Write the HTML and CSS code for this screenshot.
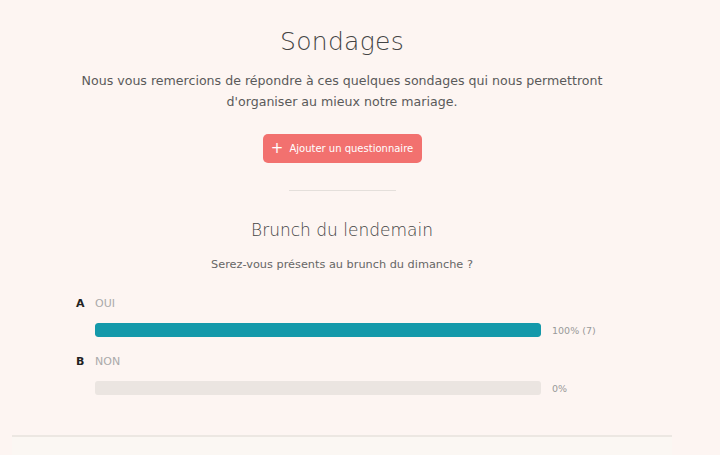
FILE: index.html
```html
<!DOCTYPE html>
<html lang="fr">
<head>
<meta charset="utf-8">
<title>Sondages</title>
<link rel="stylesheet" href="styles.css">
</head>
<body>
<main class="page">
  <section class="intro">
    <h1 class="title">Sondages</h1>
    <p class="lead">Nous vous remercions de répondre à ces quelques sondages qui nous permettront<br>d'organiser au mieux notre mariage.</p>
    <button class="add-btn" type="button"><span class="plus">+</span> Ajouter un questionnaire</button>
    <hr class="divider">
  </section>
  <section class="poll">
    <h2 class="poll-title">Brunch du lendemain</h2>
    <p class="poll-question">Serez-vous présents au brunch du dimanche ?</p>
    <div class="options">
      <div class="option">
        <div class="option-head"><span class="letter">A</span><span class="answer">OUI</span></div>
        <div class="option-row">
          <div class="bar"><div class="fill" style="width:100%"></div></div>
          <span class="pct">100% (7)</span>
        </div>
      </div>
      <div class="option">
        <div class="option-head"><span class="letter">B</span><span class="answer">NON</span></div>
        <div class="option-row">
          <div class="bar"><div class="fill" style="width:0%"></div></div>
          <span class="pct">0%</span>
        </div>
      </div>
    </div>
  </section>
  <div class="footer-line"></div>
</main>
</body>
</html>
```

FILE: styles.css
```css
html, body {
  margin: 0;
  padding: 0;
  background: #fdf5f2;
  font-family: "DejaVu Sans", "Noto Sans", sans-serif;
  color: #4a4a4a;
}

.page {
  width: 660px;
  margin-left: 12px;
  height: 455px;
  overflow: hidden;
}

.intro {
  display: flex;
  flex-direction: column;
  align-items: center;
  padding-top: 26px;
}

.title {
  margin: 0;
  font-weight: 300;
  font-size: 25px;
  line-height: 32px;
  color: #444;
  letter-spacing: 0.3px;
}

.lead {
  margin: 12px 0 0;
  text-align: center;
  font-size: 12.6px;
  line-height: 21px;
  color: #5a5a5a;
  font-weight: normal;
}

.add-btn {
  margin-top: 22px;
  width: 159px;
  height: 29px;
  border: none;
  border-radius: 5px;
  background: #f2716f;
  color: #fff;
  font-family: inherit;
  font-size: 10px;
  padding: 0;
  display: flex;
  align-items: center;
  justify-content: center;
  gap: 3px;
}

.plus {
  font-size: 15px;
  line-height: 1;
  margin-right: 3px;
}

.divider {
  margin: 27px 0 0;
  width: 107px;
  border: none;
  border-top: 1px solid #e4dfdb;
}

.poll {
  display: flex;
  flex-direction: column;
  align-items: center;
}

.poll-title {
  margin: 27px 0 0;
  font-size: 17px;
  line-height: 24px;
  font-weight: 300;
  color: #444;
}

.poll-question {
  margin: 15px 0 0;
  font-size: 11.3px;
  line-height: 16px;
  color: #666;
}

.options {
  align-self: stretch;
  padding-left: 64px;
  margin-top: 22px;
  display: flex;
  flex-direction: column;
  gap: 16px;
}

.option-head {
  display: flex;
  align-items: center;
  height: 16px;
}

.letter {
  width: 19px;
  font-size: 11px;
  font-weight: bold;
  color: #222;
}

.answer {
  font-size: 11px;
  color: #aaa;
}

.option-row {
  margin-top: 12px;
  display: flex;
  align-items: center;
  padding-left: 19px;
}

.bar {
  width: 446px;
  height: 14px;
  border-radius: 3px;
  background: #ebe5e1;
  overflow: hidden;
}

.fill {
  height: 100%;
  background: #1499aa;
  border-radius: 3px;
}

.pct {
  margin-left: 11px;
  font-size: 9.5px;
  color: #999;
}

.footer-line {
  margin-top: 40px;
  height: 20px;
  border-top: 2px solid #ece7e2;
  background: #fbf7f3;
}
```
